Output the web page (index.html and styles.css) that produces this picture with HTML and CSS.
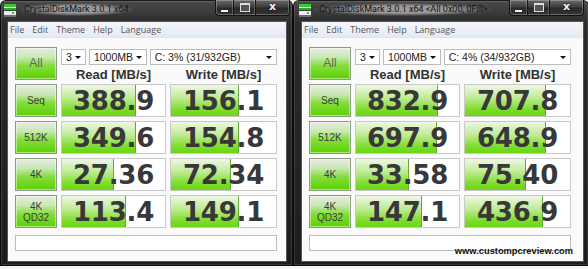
FILE: index.html
```html
<!DOCTYPE html>
<html>
	<head>
		<meta charset="utf-8">
		<title>CrystalDiskMark 3.0.1 x64</title>
		<link rel="stylesheet" href="styles.css">
	</head>
	<body>
		<div class="desk">
			<div class="win win-left">
				<div class="titlebar">
					<svg class="appicon" width="12" height="13" viewBox="0 0 12 13">
						<rect x="0" y="0" width="12" height="3" fill="#3fc43a"/>
						<rect x="0" y="3" width="12" height="1" fill="#e8f6e8"/>
						<rect x="0" y="4" width="12" height="2" fill="#2fa92c"/>
						<rect x="0" y="7" width="12" height="5" fill="#e9ecef"/>
						<rect x="0" y="11" width="12" height="2" fill="#6b6f74"/>
						<rect x="8" y="8" width="2" height="2" fill="#3fc43a"/>
					</svg>
					<span class="title">CrystalDiskMark 3.0.1 x64</span>
					<div class="caption">
						<span class="cb cb-min"></span><span class="cb cb-max"></span><span class="cb cb-close">x</span>
					</div>
				</div>
				<div class="client">
					<div class="menubar">
						<span>File</span><span>Edit</span><span>Theme</span><span>Help</span><span>Language</span>
					</div>
					<div class="board">
						<div class="btn btn-all">All</div>
						<div class="opts">
							<div class="selects">
								<div class="sel sel-count">3</div>
								<div class="sel sel-size">1000MB</div>
								<div class="sel sel-drive">C: 3% (31/932GB)</div>
							</div>
							<div class="hd">Read [MB/s]</div>
							<div class="hd">Write [MB/s]</div>
						</div>

						<div class="btn">Seq</div>
						<div class="cell" style="--fill: 72%">388.9</div>
						<div class="cell" style="--fill: 64%">156.1</div>

						<div class="btn">512K</div>
						<div class="cell" style="--fill: 72%">349.6</div>
						<div class="cell" style="--fill: 64%">154.8</div>

						<div class="btn">4K</div>
						<div class="cell" style="--fill: 50%">27.36</div>
						<div class="cell" style="--fill: 57%">72.34</div>

						<div class="btn btn-two">4K<br>QD32</div>
						<div class="cell" style="--fill: 62%">113.4</div>
						<div class="cell" style="--fill: 64%">149.1</div>

						<div class="comment"></div>
					</div>
				</div>
			</div>

			<div class="win win-right">
				<div class="titlebar">
					<svg class="appicon" width="12" height="13" viewBox="0 0 12 13">
						<rect x="0" y="0" width="12" height="3" fill="#3fc43a"/>
						<rect x="0" y="3" width="12" height="1" fill="#e8f6e8"/>
						<rect x="0" y="4" width="12" height="2" fill="#2fa92c"/>
						<rect x="0" y="7" width="12" height="5" fill="#e9ecef"/>
						<rect x="0" y="11" width="12" height="2" fill="#6b6f74"/>
						<rect x="8" y="8" width="2" height="2" fill="#3fc43a"/>
					</svg>
					<span class="title">CrystalDiskMark 3.0.1 x64 &lt;All 0x00, 0Fill&gt;</span>
					<div class="caption">
						<span class="cb cb-min"></span><span class="cb cb-max"></span><span class="cb cb-close">x</span>
					</div>
				</div>
				<div class="client">
					<div class="menubar">
						<span>File</span><span>Edit</span><span>Theme</span><span>Help</span><span>Language</span>
					</div>
					<div class="board">
						<div class="btn btn-all">All</div>
						<div class="opts">
							<div class="selects">
								<div class="sel sel-count">3</div>
								<div class="sel sel-size">1000MB</div>
								<div class="sel sel-drive">C: 4% (34/932GB)</div>
							</div>
							<div class="hd">Read [MB/s]</div>
							<div class="hd">Write [MB/s]</div>
						</div>

						<div class="btn">Seq</div>
						<div class="cell" style="--fill: 79%">832.9</div>
						<div class="cell" style="--fill: 77%">707.8</div>

						<div class="btn">512K</div>
						<div class="cell" style="--fill: 78%">697.9</div>
						<div class="cell" style="--fill: 77%">648.9</div>

						<div class="btn">4K</div>
						<div class="cell" style="--fill: 51%">33.58</div>
						<div class="cell" style="--fill: 58%">75.40</div>

						<div class="btn btn-two">4K<br>QD32</div>
						<div class="cell" style="--fill: 64%">147.1</div>
						<div class="cell" style="--fill: 74%">436.9</div>

						<div class="comment"></div>
					</div>
					<span class="watermark">www.custompcreview.com</span>
				</div>
			</div>
		</div>
	</body>
</html>
```

FILE: styles.css
```css
* {
	box-sizing: border-box;
}

html, body {
	margin: 0;
	background: #fff;
}

.desk {
	display: flex;
	width: 588px;
	height: 269px;
	overflow: hidden;
	background: #f4f4f4;
}

/* window frame */

.win {
	flex: none;
	display: flex;
	flex-direction: column;
	height: 266px;
	border: 1px solid #0b0b0b;
	border-top-color: #1a1a1a;
	border-radius: 6px 6px 0 0;
	background: linear-gradient(#4a4a4a, #2c2c2c 22px, #242424 60%, #1c1c1c);
	box-shadow: inset 0 0 0 1px rgba(255, 255, 255, 0.12);
}

.win-left {
	width: 293px;
}

.win-right {
	width: 296px;
}

.titlebar {
	flex: none;
	display: flex;
	align-items: flex-start;
	height: 20px;
}

.win-left .titlebar {
	padding-left: 3px;
}

.win-right .titlebar {
	padding-left: 5px;
}

.appicon {
	flex: none;
	margin-top: 3px;
}

.title {
	margin: 2px 0 0 3px;
	padding: 0 5px;
	font: 9px/13px Roboto, sans-serif;
	color: #121212;
	white-space: nowrap;
	border-radius: 7px;
	background: radial-gradient(ellipse closest-side, rgba(170, 170, 170, 0.85) 55%, rgba(120, 120, 120, 0));
}

.caption {
	display: flex;
	margin-left: auto;
	margin-top: -1px;
	height: 16px;
	border: 1px solid #111;
	border-top: none;
	border-radius: 0 0 4px 4px;
	background: linear-gradient(#6a6a6a, #3e3e3e 45%, #2a2a2a 55%, #333);
	box-shadow: inset 0 0 0 1px rgba(255, 255, 255, 0.25);
	overflow: hidden;
}

.win-left .caption {
	margin-right: 2px;
}

.win-right .caption {
	margin-right: 4px;
}

.cb {
	display: flex;
	align-items: center;
	justify-content: center;
	height: 100%;
	border-right: 1px solid #161616;
	box-shadow: inset -1px 0 0 rgba(255, 255, 255, 0.2);
}

.cb-min {
	width: 18px;
}

.cb-min::after {
	content: "";
	width: 7px;
	height: 2px;
	margin-top: 6px;
	background: #f2f2f2;
	box-shadow: 0 0 1px #000;
}

.cb-max {
	width: 22px;
}

.cb-max::after {
	content: "";
	width: 8px;
	height: 6px;
	border: 1px solid #ddd;
	border-top-width: 2px;
	background: #555;
}

.cb-close {
	width: 33px;
	border-right: none;
	box-shadow: none;
	font: bold 11px/1 "DejaVu Sans", sans-serif;
	color: #f4f4f4;
	padding-bottom: 2px;
	text-shadow: 0 0 2px #000;
}

/* client area */

.client {
	position: relative;
	flex: 1;
	margin-bottom: 3px;
	border: 1px solid #555;
	background: #fafafa;
}

.win-left .client {
	margin-left: 6px;
	margin-right: 5px;
}

.win-right .client {
	margin-left: 7px;
	margin-right: 4px;
}

.menubar {
	display: flex;
	gap: 8px;
	height: 16px;
	padding-left: 2px;
	background: linear-gradient(#f5f7fb, #e4e9f2);
	border-bottom: 1px solid #dfe4ec;
	font: 9px/15px "Open Sans", sans-serif;
	color: #555;
}

.board {
	display: grid;
	grid-template-columns: 42px 105px 107px;
	grid-template-rows: repeat(5, 33px) 19px;
	gap: 4px;
	padding: 9px 0 0 7px;
}

.btn {
	display: flex;
	align-items: center;
	justify-content: center;
	border: 1px solid #8c9a86;
	background: linear-gradient(#e6ece2, #c9e8b3 30%, #84dc3c 58%, #5ad200);
	box-shadow: inset 0 0 0 1px rgba(255, 255, 255, 0.45);
	font: 10px/11px "Liberation Sans", Arial, sans-serif;
	color: #3c3c3c;
	text-align: center;
}

.btn-all {
	font-size: 12px;
	color: #5d6a55;
}

.btn-two {
	line-height: 11px;
	padding-top: 1px;
}

.opts {
	grid-column: 2 / 4;
	display: grid;
	grid-template-columns: 105px 107px;
	column-gap: 4px;
	align-content: start;
	padding-top: 2px;
}

.selects {
	grid-column: 1 / 3;
	display: flex;
	gap: 3px;
	height: 16px;
}

.sel {
	position: relative;
	height: 16px;
	padding-left: 4px;
	border: 1px solid #bcbcbc;
	background: #fff;
	font: 10.5px/14px "Liberation Sans", Arial, sans-serif;
	color: #222;
	white-space: nowrap;
}

.sel::after {
	content: "";
	position: absolute;
	right: 4px;
	top: 6px;
	border-left: 3px solid transparent;
	border-right: 3px solid transparent;
	border-top: 3px solid #111;
}

.sel-count {
	width: 25px;
}

.sel-size {
	width: 58px;
}

.sel-drive {
	width: 128px;
}

.hd {
	margin-top: 2px;
	font: bold 13px/15px "Liberation Sans", Arial, sans-serif;
	color: #333;
	text-align: center;
}

.cell {
	--edge: #6aa43c;
	padding-top: 2px;
	border: 1px solid #c9c9c9;
	background:
		linear-gradient(var(--edge), var(--edge)) no-repeat var(--fill) 0 / 1px 100%,
		linear-gradient(#eef7e6, #bfeb94 42%, #7cdc2a 80%, #6ad614) no-repeat 0 0 / var(--fill) 100%,
		#fff;
	font: bold 26px/29px "DejaVu Sans", Verdana, sans-serif;
	color: #383838;
	text-align: center;
	letter-spacing: -0.2px;
}

.comment {
	grid-column: 1 / 4;
	margin-top: 3px;
	border: 1px solid #bdbdbd;
	background: #fff;
}

.watermark {
	position: absolute;
	right: 10px;
	bottom: 5px;
	font: bold 9.3px/10px "Liberation Sans", Arial, sans-serif;
	color: #111;
}
```
